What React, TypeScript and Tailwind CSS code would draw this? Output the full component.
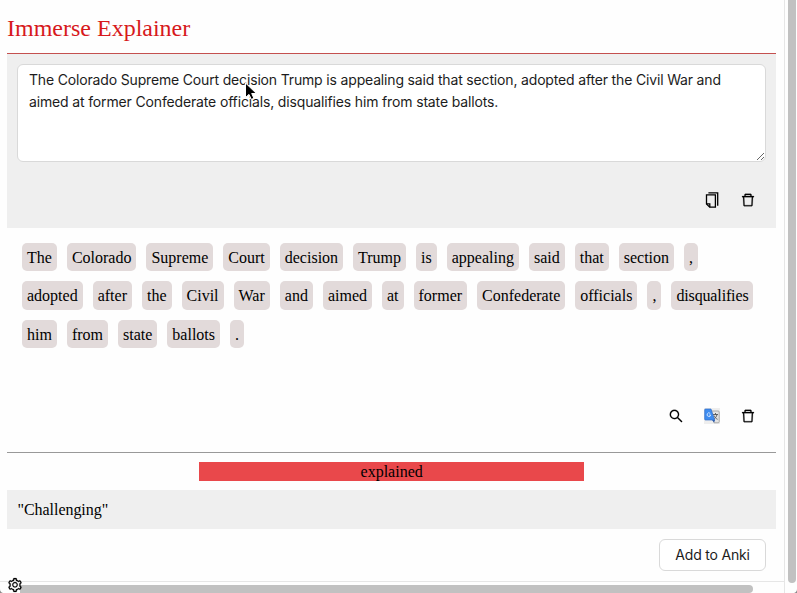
import { AiOutlineDelete, AiOutlineSearch, AiOutlineSetting } from "react-icons/ai";

const ROWS = [
  ["The", "Colorado", "Supreme", "Court", "decision", "Trump", "is", "appealing", "said", "that", "section", ","],
  ["adopted", "after", "the", "Civil", "War", "and", "aimed", "at", "former", "Confederate", "officials", ",", "disqualifies"],
  ["him", "from", "state", "ballots", "."],
];

function CopyIcon() {
  return (
    <svg width="16" height="16" viewBox="0 0 16 16" fill="none" stroke="#000" strokeWidth="1.3" className="block">
      <path d="M4.4 .8h9.3v13" />
      <path d="M2.5 2.9h8.9v12.3H5.7L2.5 12z" />
      <path d="M2.5 11.8h3.3v3.4" />
    </svg>
  );
}

function TranslateIcon() {
  return (
    <svg width="16" height="16" viewBox="0 0 16 16" className="block bg-[#eeeeee]">
      <path d="M7 3h7.2a1 1 0 0 1 1 1v9.8a1 1 0 0 1-1 1H10z" fill="#e4e4e4" stroke="#999" strokeWidth=".8" />
      <path d="M9 6.5h5M11.5 5v1.5M13 6.5c-.4 2.2-1.8 3.8-3.5 4.8M10 7.5c.6 1.7 1.8 3 3.6 3.8" fill="none" stroke="#555" strokeWidth=".9" />
      <path d="M8 12h3l-1 2.6z" fill="#2856a8" />
      <path d="M1.5 1H7l3.7 11H1.5a.8.8 0 0 1-.8-.8V1.8a.8.8 0 0 1 .8-.8z" fill="#3e8cf0" stroke="#356fc4" strokeWidth=".7" />
      <path d="M6.2 5.4A1.8 1.8 0 1 0 6.7 7H5.2" fill="none" stroke="#d9e9ff" strokeWidth=".9" />
    </svg>
  );
}

export default function App() {
  return (
    <div className="relative flex h-[593px] w-[797px] overflow-hidden bg-[#fefefe] font-['Liberation_Serif',serif] text-black">
      <div className="flex w-[785px] flex-col border-r border-[#e6e6e6]">
        <main className="ml-[7px] flex h-[581px] w-[769px] flex-col">
          <h1 className="h-[53px] pt-[10px] text-[24px] leading-[36px] text-[#d7191c]">Immerse Explainer</h1>
          <section className="flex h-[175px] flex-col border-t border-[#c4504f] bg-[#efefef] px-[10px] pt-[10px]">
            <div className="relative h-[98px] w-[749px] rounded-md border border-[#d9d9d9] bg-white px-[11px] pt-[4px] font-[Inter,sans-serif] text-[14px] leading-[22px] tracking-[-0.165px] text-[#1c1c1c]">
              <p className="whitespace-nowrap">The Colorado Supreme Court decision Trump is appealing said that section, adopted after the Civil War and</p>
              <p className="whitespace-nowrap tracking-[-0.15px]">aimed at former Confederate officials, disqualifies him from state ballots.</p>
              <svg className="absolute bottom-0 right-0" width="9" height="9" viewBox="0 0 9 9">
                <path d="M1 8 8 1M5 8l3-3" stroke="#666" strokeWidth="1" fill="none" />
              </svg>
            </div>
            <div className="mt-[30px] flex justify-end gap-5 pr-[10px]">
              <CopyIcon />
              <AiOutlineDelete size={16} strokeWidth={14} />
            </div>
          </section>
          <section className="flex h-[224px] flex-col pt-[15px] pl-[15px]">
            <div className="flex flex-col gap-[10px]">
              {ROWS.map((row, i) => (
                <div key={i} className="flex gap-[10px]">
                  {row.map((word, j) => (
                    <span key={j} className={`h-[28.4px] rounded-[5px] bg-[#e2dada] px-[5px] text-[16px] leading-[29.5px] ${word === "disqualifies" ? "tracking-[-0.14px]" : ""}`}>{word}</span>
                  ))}
                </div>
              ))}
            </div>
            <div className="mt-[59.8px] flex justify-end gap-5 pr-[20px]">
              <AiOutlineSearch size={16} strokeWidth={12} />
              <TranslateIcon />
              <AiOutlineDelete size={16} strokeWidth={14} />
            </div>
          </section>
          <section className="flex flex-col border-t border-[#999] pt-[9px]">
            <div className="ml-[192.4px] h-[18.5px] w-[384.5px] bg-[#e9484b] text-center text-[16px] leading-[19.5px]">explained</div>
            <div className="mt-[9.5px] h-[39px] bg-[#efefef] pl-[10.5px] text-[16px] leading-[39px] tracking-[-0.05px]">"Challenging"</div>
            <div className="mt-[10px] flex justify-end pr-[10px]">
              <button className="h-8 w-[107px] rounded-md border border-[#d9d9d9] bg-white pb-px text-center font-[Inter,sans-serif] text-[14px] tracking-[-0.2px] text-[#1c1c1c]">Add to Anki</button>
            </div>
          </section>
        </main>
        <div className="h-3 border-t border-[#e6e6e6] pt-[3px]">
          <div className="h-2 w-[753px] rounded-r-full bg-[#c1c1c1]" />
        </div>
      </div>
      <div className="flex-1 pl-[3px]">
        <div className="h-[583px] w-2 rounded-b-full bg-[#c1c1c1]" />
      </div>

      <div className="absolute left-0 top-[583px] h-[10px] w-[20px] bg-[#fefefe]" />
      <AiOutlineSetting className="absolute left-[7px] top-[577px]" size={16} strokeWidth={14} />
      <svg className="absolute bottom-0 left-0" width="3" height="4" viewBox="0 0 3 4"><path d="M0 0Q0 3 3 4H0z" fill="#888" /></svg>
      <svg className="absolute bottom-0 right-0" width="3" height="4" viewBox="0 0 3 4"><path d="M3 0Q3 3 0 4H3z" fill="#888" /></svg>
      <svg className="absolute left-[244px] top-[82px]" width="14" height="19" viewBox="0 0 14 19">
        <path d="M1.5 1v14.5L5 12.4l2.3 5 2.6-1.1-2.2-4.8h4.7z" fill="#000" stroke="#fff" strokeWidth="1" />
      </svg>
    </div>
  );
}
